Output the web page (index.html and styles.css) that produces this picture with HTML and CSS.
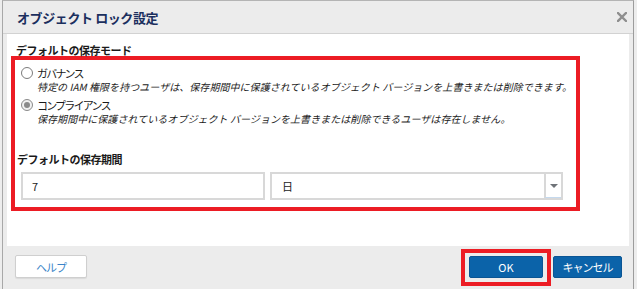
FILE: index.html
```html
<!DOCTYPE html>
<html lang="ja">
<head>
<meta charset="utf-8">
<link rel="stylesheet" href="styles.css">
</head>
<body>
<div class="frame">
  <div class="header">
    <span class="title">オブジェクト ロック設定</span>
    <svg class="close" width="10" height="10" viewBox="0 0 10 10"><path d="M1 1 L9 9 M9 1 L1 9" stroke="#8e8e8e" stroke-width="2.4" stroke-linecap="square"/></svg>
  </div>
  <div class="content">
    <div class="label first">デフォルトの保存モード</div>
    <div class="highlight">
      <div class="option">
        <span class="radio"></span>
        <div class="opt-text">
          <div class="opt-title">ガバナンス</div>
          <div class="opt-desc">特定の IAM 権限を持つユーザは、保存期間中に保護されているオブジェクト バージョンを上書きまたは削除できます。</div>
        </div>
      </div>
      <div class="option second">
        <span class="radio checked"></span>
        <div class="opt-text">
          <div class="opt-title">コンプライアンス</div>
          <div class="opt-desc">保存期間中に保護されているオブジェクト バージョンを上書きまたは削除できるユーザは存在しません。</div>
        </div>
      </div>
      <div class="label period">デフォルトの保存期間</div>
      <div class="fields">
        <div class="input">7</div>
        <div class="select">
          <span class="select-value">日</span>
          <span class="select-arrow"><svg width="8" height="4" viewBox="0 0 8 4"><path d="M0 0 H8 L4 4 Z" fill="#6f7378"/></svg></span>
        </div>
      </div>
    </div>
  </div>
  <div class="footer">
    <button class="btn help">ヘルプ</button>
    <div class="spacer"></div>
    <div class="ok-mark"><button class="btn primary ok">OK</button></div>
    <button class="btn primary cancel">キャンセル</button>
  </div>
</div>
</body>
</html>
```
FILE: styles.css
```css
* { box-sizing: border-box; }
html, body { margin: 0; padding: 0; }
body {
  width: 637px;
  height: 289px;
  background: #ededed;
  font-family: "Noto Sans CJK JP", "Noto Sans", sans-serif;
  color: #1c1c1c;
  overflow: hidden;
}
.frame {
  margin: 0 3px 0 2px;
  height: 289px;
  border-top: 1px solid #b4b4b4;
  border-left: 1px solid #a8a8a8;
  border-right: 1px solid #9c9c9c;
  background: #ececec;
  display: flex;
  flex-direction: column;
}
.header {
  height: 33px;
  flex: none;
  display: flex;
  align-items: center;
  justify-content: space-between;
  padding: 0 6px 0 14px;
  border-bottom: 1px solid #d2d2d2;
  background: #ececec;
}
.title {
  font-size: 13px;
  font-weight: bold;
  color: #1b2f5e;
  letter-spacing: -0.4px;
  margin-top: 1px;
}
.content {
  height: 212px;
  flex: none;
  margin: 0 4px;
  background: #ffffff;
  padding-top: 10px;
}
.label {
  font-size: 11px;
  font-weight: bold;
  letter-spacing: -0.5px;
  line-height: 12px;
  color: #1a1a1a;
}
.label.first { padding-left: 9px; }
.highlight {
  margin-left: 4px;
  width: 569px;
  border: 4px solid #ec1c24;
  padding: 6px 13px 7px 2px;
}
.option {
  display: flex;
  align-items: flex-start;
  margin-left: 4px;
}
.option.second { margin-top: 4px; }
.radio {
  width: 12px;
  height: 12px;
  border-radius: 50%;
  border: 1px solid #7c7c7c;
  background: #fff;
  margin-top: 1px;
  flex: none;
  display: flex;
  align-items: center;
  justify-content: center;
}
.radio.checked { background: #f1f1f1; border-color: #8a8a8a; }
.radio.checked::after {
  content: "";
  width: 6px;
  height: 6px;
  border-radius: 50%;
  background: #8a8a8a;
}
.opt-text { margin-left: 4px; white-space: nowrap; }
.opt-title {
  font-size: 11px;
  line-height: 14px;
  letter-spacing: -1.8px;
  color: #1a1a1a;
}
.opt-desc {
  font-size: 10px;
  line-height: 14px;
  font-style: italic;
  letter-spacing: 0.05px;
  color: #1a1a1a;
}
.label.period { margin-top: 26px; line-height: 14px; }
.fields {
  display: flex;
  gap: 5px;
  margin-top: 6px;
  margin-left: 4px;
}
.input, .select {
  height: 28px;
  border: 2px solid #d8d8d8;
  background: #fff;
  font-size: 11px;
  display: flex;
  align-items: center;
}
.input { width: 244px; padding-left: 9px; }
.select { width: 293px; padding-left: 10px; }
.select-value { flex: 1; }
.select-arrow {
  width: 17px;
  height: 100%;
  border-left: 2px solid #d8d8d8;
  border-bottom: 1px solid #c5d9ee;
  display: flex;
  align-items: center;
  justify-content: center;
}
.footer {
  flex: 1;
  display: flex;
  align-items: flex-start;
  padding: 3px 11px 0 12px;
  background: #ececec;
}
.spacer { flex: 1; }
.btn {
  font-family: "Noto Sans CJK JP", "Noto Sans", sans-serif;
  font-size: 11px;
  height: 23px;
  border-radius: 2px;
  padding: 0;
  cursor: pointer;
}
.help {
  margin-top: 6px;
  width: 72px;
  background: #fff;
  border: 1px solid #cfcfcf;
  box-shadow: 0 1px 1px rgba(0,0,0,0.08);
  color: #3a84c8;
  letter-spacing: -1px;
}
.ok-mark {
  border: 4px solid #ec1c24;
  padding: 3px 4px 4px 4px;
}
.primary {
  background: #0b63a9;
  border: 1px solid #0a5594;
  color: #fff;
}
.ok { width: 74px; height: 22px; display: block; }
.cancel {
  margin-top: 7px;
  margin-left: 2px;
  width: 69px;
  height: 22px;
  letter-spacing: -1px;
}
```
